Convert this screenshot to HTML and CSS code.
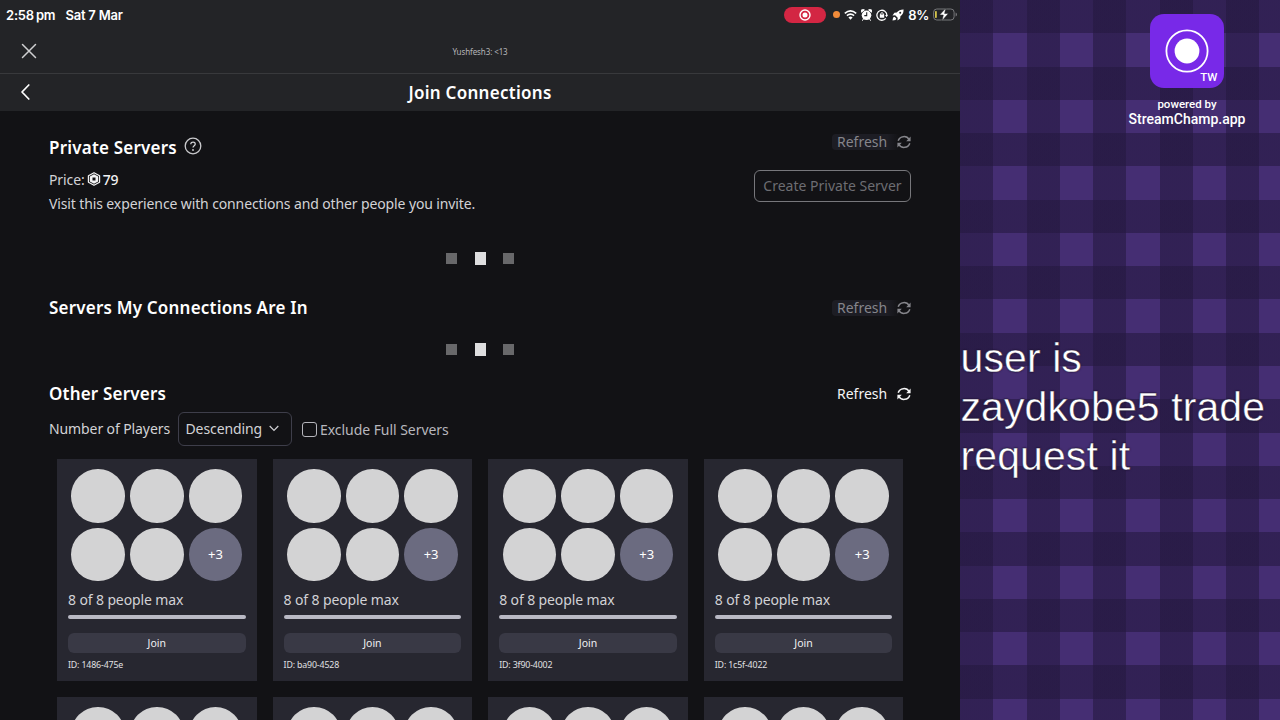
FILE: index.html
```html
<!DOCTYPE html>
<html lang="en">
<head>
    <meta charset="UTF-8">
    <meta name="viewport" content="width=device-width, initial-scale=1.0">
    <title>Join Connections</title>
    <link rel="stylesheet" href="styles.css">
</head>
<body>

<svg class="symbols" width="0" height="0">
    <symbol id="refresh" viewBox="0 0 14 14">
        <path d="M1.2 5.8A6 5.8 0 0 1 12.2 4.6M12.8 8.2A6 5.8 0 0 1 1.8 9.4" fill="none" stroke="currentColor" stroke-width="1.5"/>
        <path d="M13.6 1.6V6.2H9.2ZM.4 12.4V7.8H4.8Z" fill="currentColor"/>
    </symbol>
</svg>

<div class="app">
    <header>
        <div class="status-bar">
            <span class="time">2:58<span class="pm">pm</span></span>
            <span class="date">Sat 7 Mar</span>
            <div class="status-icons">
                <span class="recording">
                    <svg width="12" height="12" viewBox="0 0 12 12"><circle cx="6" cy="6" r="5" fill="none" stroke="#fff" stroke-width="1.4"/><circle cx="6" cy="6" r="2.5" fill="#fff"/></svg>
                </span>
                <span class="mic-dot"></span>
                <svg class="wifi" width="13" height="10" viewBox="0 0 13 10"><path d="M.8 3.4Q6.5-1.6 12.2 3.4M2.9 5.7Q6.5 2.7 10.1 5.7" fill="none" stroke="#fff" stroke-width="1.6"/><path d="M4.4 7.4Q6.5 5.8 8.6 7.4L6.5 9.7Z" fill="#fff"/></svg>
                <svg class="alarm" width="11" height="12" viewBox="0 0 11 12"><path d="M.3 3.2V1.1L1.5.4 3.4.9ZM10.7 3.2V1.1L9.5.4 7.6.9ZM1.4 11.7 2.7 9.5M9.6 11.7 8.3 9.5" fill="#fff" stroke="#fff"/><circle cx="5.5" cy="6.3" r="4.8" fill="#fff"/><path d="M5.7 3.3V6.6H3.3" fill="none" stroke="#232427" stroke-width="1.1"/></svg>
                <svg class="lock" width="12" height="12" viewBox="0 0 12 12"><path d="M9.8 9.4A5 5 0 1 1 10.9 6.2" fill="none" stroke="#fff" stroke-width="1.3"/><path d="M9.1 6H12L10.6 8.2ZM3.8 5.5H8.2V8.7H3.8Z" fill="#fff"/><path d="M4.7 6V4.6Q6 2.5 7.3 4.6V6" fill="none" stroke="#fff"/></svg>
                <svg class="rocket" width="12" height="12" viewBox="0 0 12 12"><path d="M11.6.4Q7.2.3 4.7 3.6L2.4 3.8.5 6.5 3.2 6.3 5.7 8.8 5.5 11.5 8.2 9.6 8.4 7.3Q11.7 4.8 11.6.4ZM2.6 7.7 1.1 8.5.5 11.5 3.5 10.9 4.3 9.4Z" fill="#fff"/><circle cx="8.2" cy="3.8" r="1" fill="#232427"/></svg>
                <span class="percent">8%</span>
                <svg class="battery" width="25" height="13" viewBox="0 0 25 13"><rect x=".6" y="1" width="20.5" height="11" rx="3.2" fill="none" stroke="#77787b"/><rect x="2" y="3" width="1.8" height="7" rx=".8" fill="#d5c54b"/><path d="M22.6 4.5V8.5Q24 8 24 6.5 24 5 22.6 4.5Z" fill="#77787b"/><path d="M12.9 0 6.6 7H10.3L9 12.7 15.4 5.5H11.6Z" fill="#fff" stroke="#232427" stroke-width=".5"/></svg>
            </div>
        </div>
        <div class="window-bar">
            <svg class="close" width="16" height="16" viewBox="0 0 16 16"><path d="M1.5 1.5 14.5 14.5M14.5 1.5 1.5 14.5" stroke="#cfcfd1" stroke-width="1.5" stroke-linecap="round"/></svg>
            <span>Yushfesh3: &lt;13</span>
        </div>
        <div class="nav-bar">
            <svg class="back" width="11" height="18" viewBox="0 0 11 18"><path d="M8.8 2 2 9 8.8 16" fill="none" stroke="#fff" stroke-width="1.7" stroke-linecap="round" stroke-linejoin="round"/></svg>
            <h1>Join Connections</h1>
        </div>
    </header>

    <main>
        <section class="private">
            <div class="private-info">
                <div class="private-title">
                    <h2>Private Servers</h2>
                    <svg width="18" height="18" viewBox="0 0 18 18"><circle cx="9" cy="9" r="7.8" fill="none" stroke="#c9c9cc" stroke-width="1.3"/><path d="M6.8 7.2C6.8 4.3 11.4 4.4 11.2 7.2 11.1 8.7 9 8.8 9 10.6" fill="none" stroke="#d5d5d8" stroke-width="1.3"/><circle cx="9" cy="13" r=".9" fill="#d5d5d8"/></svg>
                </div>
                <p class="price">Price:
                    <svg width="14" height="14" viewBox="0 0 14 14"><path d="M7 .7 12.6 3.8V10.2L7 13.3 1.4 10.2V3.8Z" fill="none" stroke="#f2f2f3" stroke-width="1.2" stroke-linejoin="round"/><path d="M7 2.3 11.2 4.6V9.4L7 11.7 2.8 9.4V4.6Z" fill="#f2f2f3"/><path d="M5.5 5.5H8.5V8.5H5.5Z" fill="#121215"/></svg>
                    <b>79</b>
                </p>
                <p class="description">Visit this experience with connections and other people you invite.</p>
            </div>
            <div class="private-actions">
                <button class="refresh disabled">Refresh <svg width="14" height="14"><use href="#refresh"/></svg></button>
                <button class="create">Create Private Server</button>
            </div>
        </section>
        <div class="loader"><span></span><span class="active"></span><span></span></div>

        <section class="heading-row connections">
            <h2>Servers My Connections Are In</h2>
            <button class="refresh disabled">Refresh <svg width="14" height="14"><use href="#refresh"/></svg></button>
        </section>
        <div class="loader second"><span></span><span class="active"></span><span></span></div>

        <section class="heading-row other">
            <h2>Other Servers</h2>
            <button class="refresh">Refresh <svg width="14" height="14"><use href="#refresh"/></svg></button>
        </section>
        <div class="filters">
            <span class="players-label">Number of Players</span>
            <button class="sort">Descending <svg width="10" height="7" viewBox="0 0 10 7"><path d="M.7 1 5 5.5 9.3 1" fill="none" stroke="#d0d0d4" stroke-width="1.2"/></svg></button>
            <label class="exclude"><span class="checkbox"></span>Exclude Full Servers</label>
        </div>
        <div class="server-list"></div>
    </main>
</div>

<aside>
    <div class="brand">
        <div class="brand-logo">
            <svg width="44" height="44" viewBox="0 0 44 44"><circle cx="22" cy="22" r="20.6" fill="none" stroke="#fff" stroke-width="1.8"/><circle cx="22" cy="22" r="12.4" fill="#fff"/></svg>
            <span class="tw">TW</span>
        </div>
        <p class="powered">powered by</p>
        <p class="brand-name">StreamChamp.app</p>
    </div>
    <p class="message">user is<br>zaydkobe5 trade<br>request it</p>
</aside>

<script>
    const serverIds = ['1486-475e', 'ba90-4528', '3f90-4002', '1c5f-4022', '', '', '', ''];
    const serverList = document.querySelector('.server-list');

    serverIds.forEach(id => {
        const card = document.createElement('div');
        card.className = 'server';
        card.innerHTML = `
            <div class="avatars">
                <span></span><span></span><span></span>
                <span></span><span></span><span class="more">${id ? '+3' : ''}</span>
            </div>`;
        // The next row is still loading its details
        if (id) {
            card.innerHTML += `
                <p class="count">8 of 8 people max</p>
                <div class="capacity"></div>
                <button class="join">Join</button>
                <p class="server-id">ID: ${id}</p>`;
        }
        serverList.appendChild(card);
    });
</script>

</body>
</html>
```
FILE: styles.css
```css
* {
    box-sizing: border-box;
}
body {
    margin: 0;
    display: flex;
    width: 1280px;
    height: 720px;
    overflow: hidden;
    background-color: #121215;
    color: #d2d2d6;
    font-family: "Noto Sans", sans-serif;
    font-size: 14px;
}
h1, h2, p {
    margin: 0;
}
svg {
    flex: none;
}
button {
    font: inherit;
    color: inherit;
    border: none;
    padding: 0;
    background: none;
}
.symbols {
    position: absolute;
}
.app {
    width: 960px;
    height: 720px;
    overflow: hidden;
}
header {
    height: 111px;
    background-color: #232427;
}
.status-bar {
    display: flex;
    align-items: center;
    height: 29px;
    padding: 0 2px 0 6px;
    font-family: Inter, sans-serif;
    font-size: 13px;
    font-weight: 600;
    color: white;
}
.time {
    letter-spacing: -0.2px;
}
.pm {
    margin-left: 2px;
}
.date {
    margin-left: 10px;
    letter-spacing: -0.2px;
}
.status-icons {
    display: flex;
    align-items: center;
    margin-left: auto;
}
.recording {
    display: flex;
    align-items: center;
    justify-content: center;
    width: 42px;
    height: 16px;
    margin-right: 7px;
    border-radius: 8px;
    background-color: #d32643;
}
.mic-dot {
    width: 7px;
    height: 7px;
    margin-right: 4px;
    border-radius: 50%;
    background-color: #f08b3a;
}
.wifi, .alarm, .lock, .rocket, .percent {
    margin-right: 4px;
}
.percent {
    letter-spacing: -0.3px;
}
.window-bar {
    display: flex;
    align-items: center;
    justify-content: center;
    position: relative;
    height: 45px;
    border-bottom: 1px solid #38393c;
    font-size: 8px;
    letter-spacing: -0.1px;
    color: #b5b5b8;
}
.close {
    position: absolute;
    left: 21px;
    top: 13.5px;
}
.nav-bar {
    display: flex;
    align-items: center;
    justify-content: center;
    position: relative;
    height: 37px;
}
.back {
    position: absolute;
    left: 20px;
    top: 9px;
}
h1, h2 {
    font-size: 17px;
    line-height: 24px;
    font-weight: 600;
    letter-spacing: 0.2px;
    color: white;
}
h1 {
    letter-spacing: 0.27px;
}
main {
    padding: 0 49px;
}
.private {
    display: flex;
    justify-content: space-between;
    height: 130px;
    padding-top: 23px;
}
.private-title {
    display: flex;
    gap: 7px;
    height: 32px;
}
.private-title h2 {
    line-height: 27px;
}
.private-title svg {
    margin-top: 3px;
}
.price {
    display: flex;
    align-items: center;
    gap: 2px;
    height: 26px;
    letter-spacing: -0.1px;
}
.price b {
    font-weight: 500;
    color: #f2f2f3;
}
.description {
    line-height: 23px;
    letter-spacing: -0.12px;
}
.private-actions {
    display: flex;
    flex-direction: column;
    align-items: flex-end;
}
.refresh {
    display: flex;
    align-items: center;
    justify-content: space-between;
    width: 79px;
    height: 16px;
    padding-left: 5px;
    color: #f4f4f5;
    line-height: 16px;
    border-radius: 4px;
}
.refresh.disabled {
    color: #85858b;
    background: linear-gradient(90deg, #1d1d24 70%, #121215 85%);
}
.create {
    width: 157px;
    height: 32px;
    margin-top: 20px;
    padding-bottom: 2px;
    border: 1px solid #77777b;
    border-radius: 6px;
    color: #6d6d72;
}
.loader {
    display: flex;
    align-items: center;
    justify-content: center;
    gap: 17.5px;
    height: 34px;
}
.loader span {
    width: 11px;
    height: 11px;
    background-color: #68686a;
}
.loader .active {
    height: 13px;
    background-color: #dededf;
}
.heading-row {
    display: flex;
    align-items: center;
    justify-content: space-between;
    height: 24px;
}
.connections {
    margin-top: 21px;
}
.loader.second {
    height: 35px;
    margin-top: 12px;
}
.other {
    margin-top: 15px;
}
.filters {
    display: flex;
    align-items: center;
    height: 33px;
    margin-top: 6px;
}
.players-label {
    width: 128.5px;
    letter-spacing: -0.1px;
}
.sort {
    display: flex;
    align-items: center;
    justify-content: space-between;
    width: 114px;
    height: 34px;
    padding: 0 12px 1px 7px;
    border: 1px solid #3e3e4a;
    border-radius: 6px;
    letter-spacing: -0.1px;
}
.exclude {
    display: flex;
    align-items: center;
    margin-left: 10.5px;
    padding-top: 1px;
    letter-spacing: -0.05px;
    color: #b7b7bd;
}
.checkbox {
    width: 15px;
    height: 15px;
    margin-right: 3px;
    border: 1px solid #b5b5bb;
    border-radius: 3px;
}
.server-list {
    display: grid;
    grid-template-columns: repeat(4, 199.6px);
    grid-auto-rows: 222px;
    gap: 16px;
    margin-top: 14px;
    padding-left: 8px;
}
.server {
    padding: 10px 11px;
    background-color: #272730;
}
.avatars {
    display: grid;
    grid-template-columns: repeat(3, 53.6px);
    gap: 5.1px;
    justify-content: center;
}
.avatars span {
    height: 53.6px;
    border-radius: 50%;
    background-color: #d3d3d4;
}
.avatars .more {
    background-color: #6b6b80;
    color: white;
    font-size: 13px;
    line-height: 52px;
    text-align: center;
}
.count {
    height: 22px;
    margin-top: 7.5px;
    line-height: 22px;
    letter-spacing: -0.12px;
}
.capacity {
    height: 4px;
    margin-top: 4px;
    border-radius: 2px;
    background-color: #b9b9c4;
}
.join {
    display: block;
    width: 100%;
    height: 20px;
    margin-top: 14.5px;
    border-radius: 6px;
    background-color: #393945;
    color: #f0f0f2;
    font-size: 10.5px;
}
.server-id {
    margin-top: 4.5px;
    font-size: 8.8px;
    line-height: 14px;
    letter-spacing: -0.15px;
    color: #e0e0e3;
}
aside {
    width: 320px;
    height: 720px;
    background-color: #452e73;
    background-image:
        repeating-linear-gradient(90deg, rgba(36, 24, 63, 0.58) 0 33.27px, transparent 33.27px 66.54px),
        repeating-linear-gradient(180deg, rgba(36, 24, 63, 0.58) 0 33.27px, transparent 33.27px 66.54px);
    color: white;
}
.brand {
    width: 118px;
    margin-left: 168px;
    padding-top: 13.5px;
    text-align: center;
    font-family: Roboto, sans-serif;
    font-weight: 500;
    white-space: nowrap;
}
.brand-logo {
    position: relative;
    width: 74px;
    height: 74px;
    margin-left: 21.5px;
    padding-top: 15px;
    border-radius: 14px;
    background-color: #7829e8;
}
.tw {
    position: absolute;
    right: 6px;
    bottom: 4px;
    font-size: 11.5px;
    line-height: 14px;
}
.powered {
    margin-top: 9px;
    font-size: 11.5px;
    line-height: 14px;
}
.brand-name {
    font-size: 14px;
    line-height: 17px;
}
.message {
    margin-top: 206px;
    padding-left: 0.5px;
    font-family: "Liberation Sans", sans-serif;
    font-size: 41px;
    line-height: 49px;
    letter-spacing: 0.1px;
    white-space: nowrap;
    text-shadow: 0 0 2px #1b0f2d;
    -webkit-text-stroke: 0.4px #241539;
}
```
